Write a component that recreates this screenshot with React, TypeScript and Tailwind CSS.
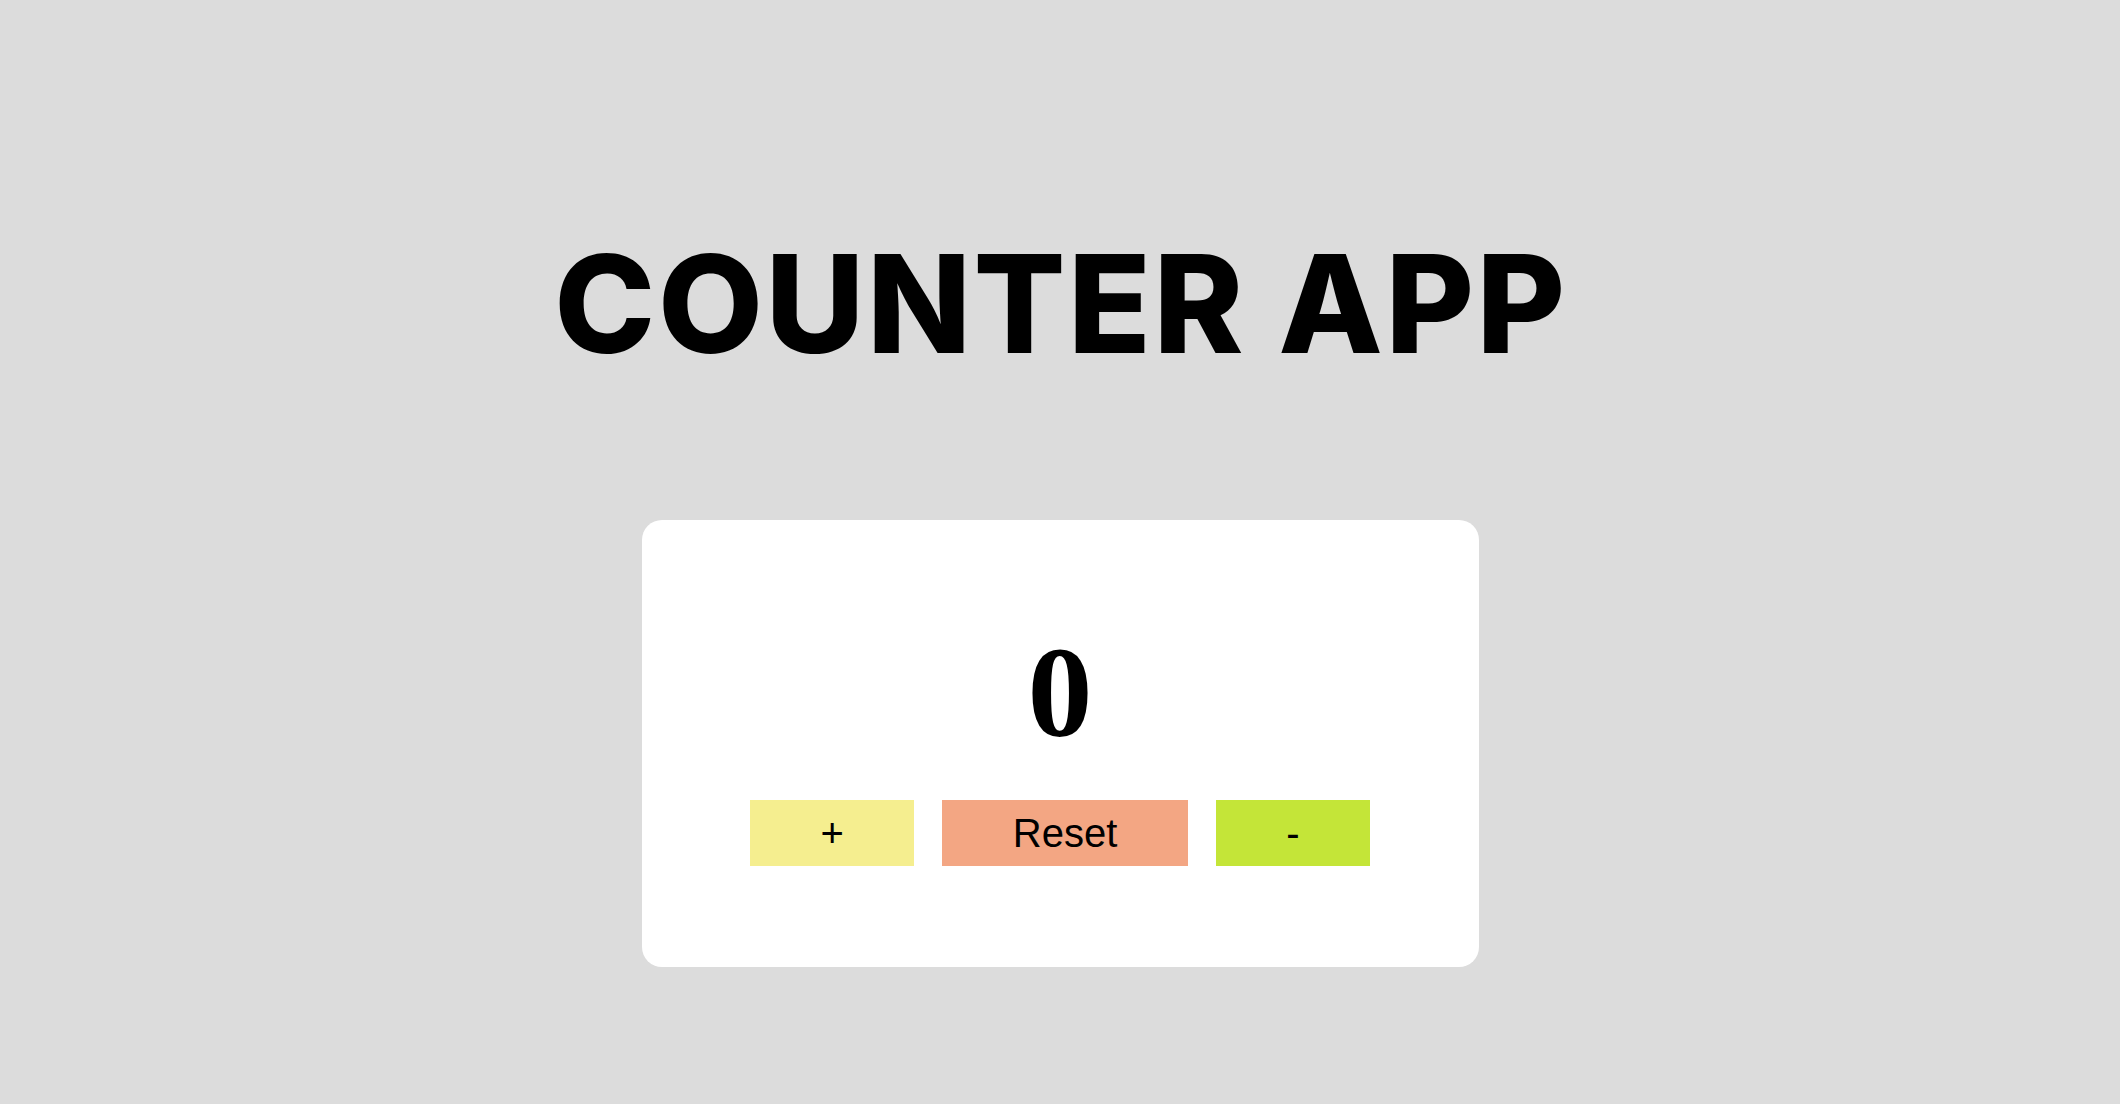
import React, { useState } from "react";

const App: React.FC = () => {
  const [count, setCount] = useState(0);

  return (
    <main className="min-h-screen bg-[#dcdcdc] pt-[236px]">
      {/* Title */}
      <h1 className="pl-[2px] text-center font-['Inter',sans-serif] text-[136px] font-extrabold leading-none tracking-[2.5px] text-black">
        COUNTER APP
      </h1>

      {/* Counter card */}
      <div className="mx-auto mt-[148px] flex w-[837px] flex-col items-center rounded-[20px] bg-white pb-[101px] pt-[101px]">
        <p className="font-['Liberation_Serif',serif] text-[130px] font-bold leading-[143px] text-black">
          {count}
        </p>

        <div className="mt-[36px] flex gap-[28px] font-['Liberation_Sans',Arial,sans-serif] text-[40px] leading-[46px] text-black">
          <button
            onClick={() => setCount(count + 1)}
            className="bg-[#f5ee8f] px-[70px] py-[10px]"
          >
            +
          </button>
          <button
            onClick={() => setCount(0)}
            className="bg-[#f3a683] px-[71px] py-[10px]"
          >
            Reset
          </button>
          <button
            onClick={() => setCount(count - 1)}
            className="bg-[#c4e538] px-[70px] py-[10px]"
          >
            -
          </button>
        </div>
      </div>
    </main>
  );
};

export default App;
